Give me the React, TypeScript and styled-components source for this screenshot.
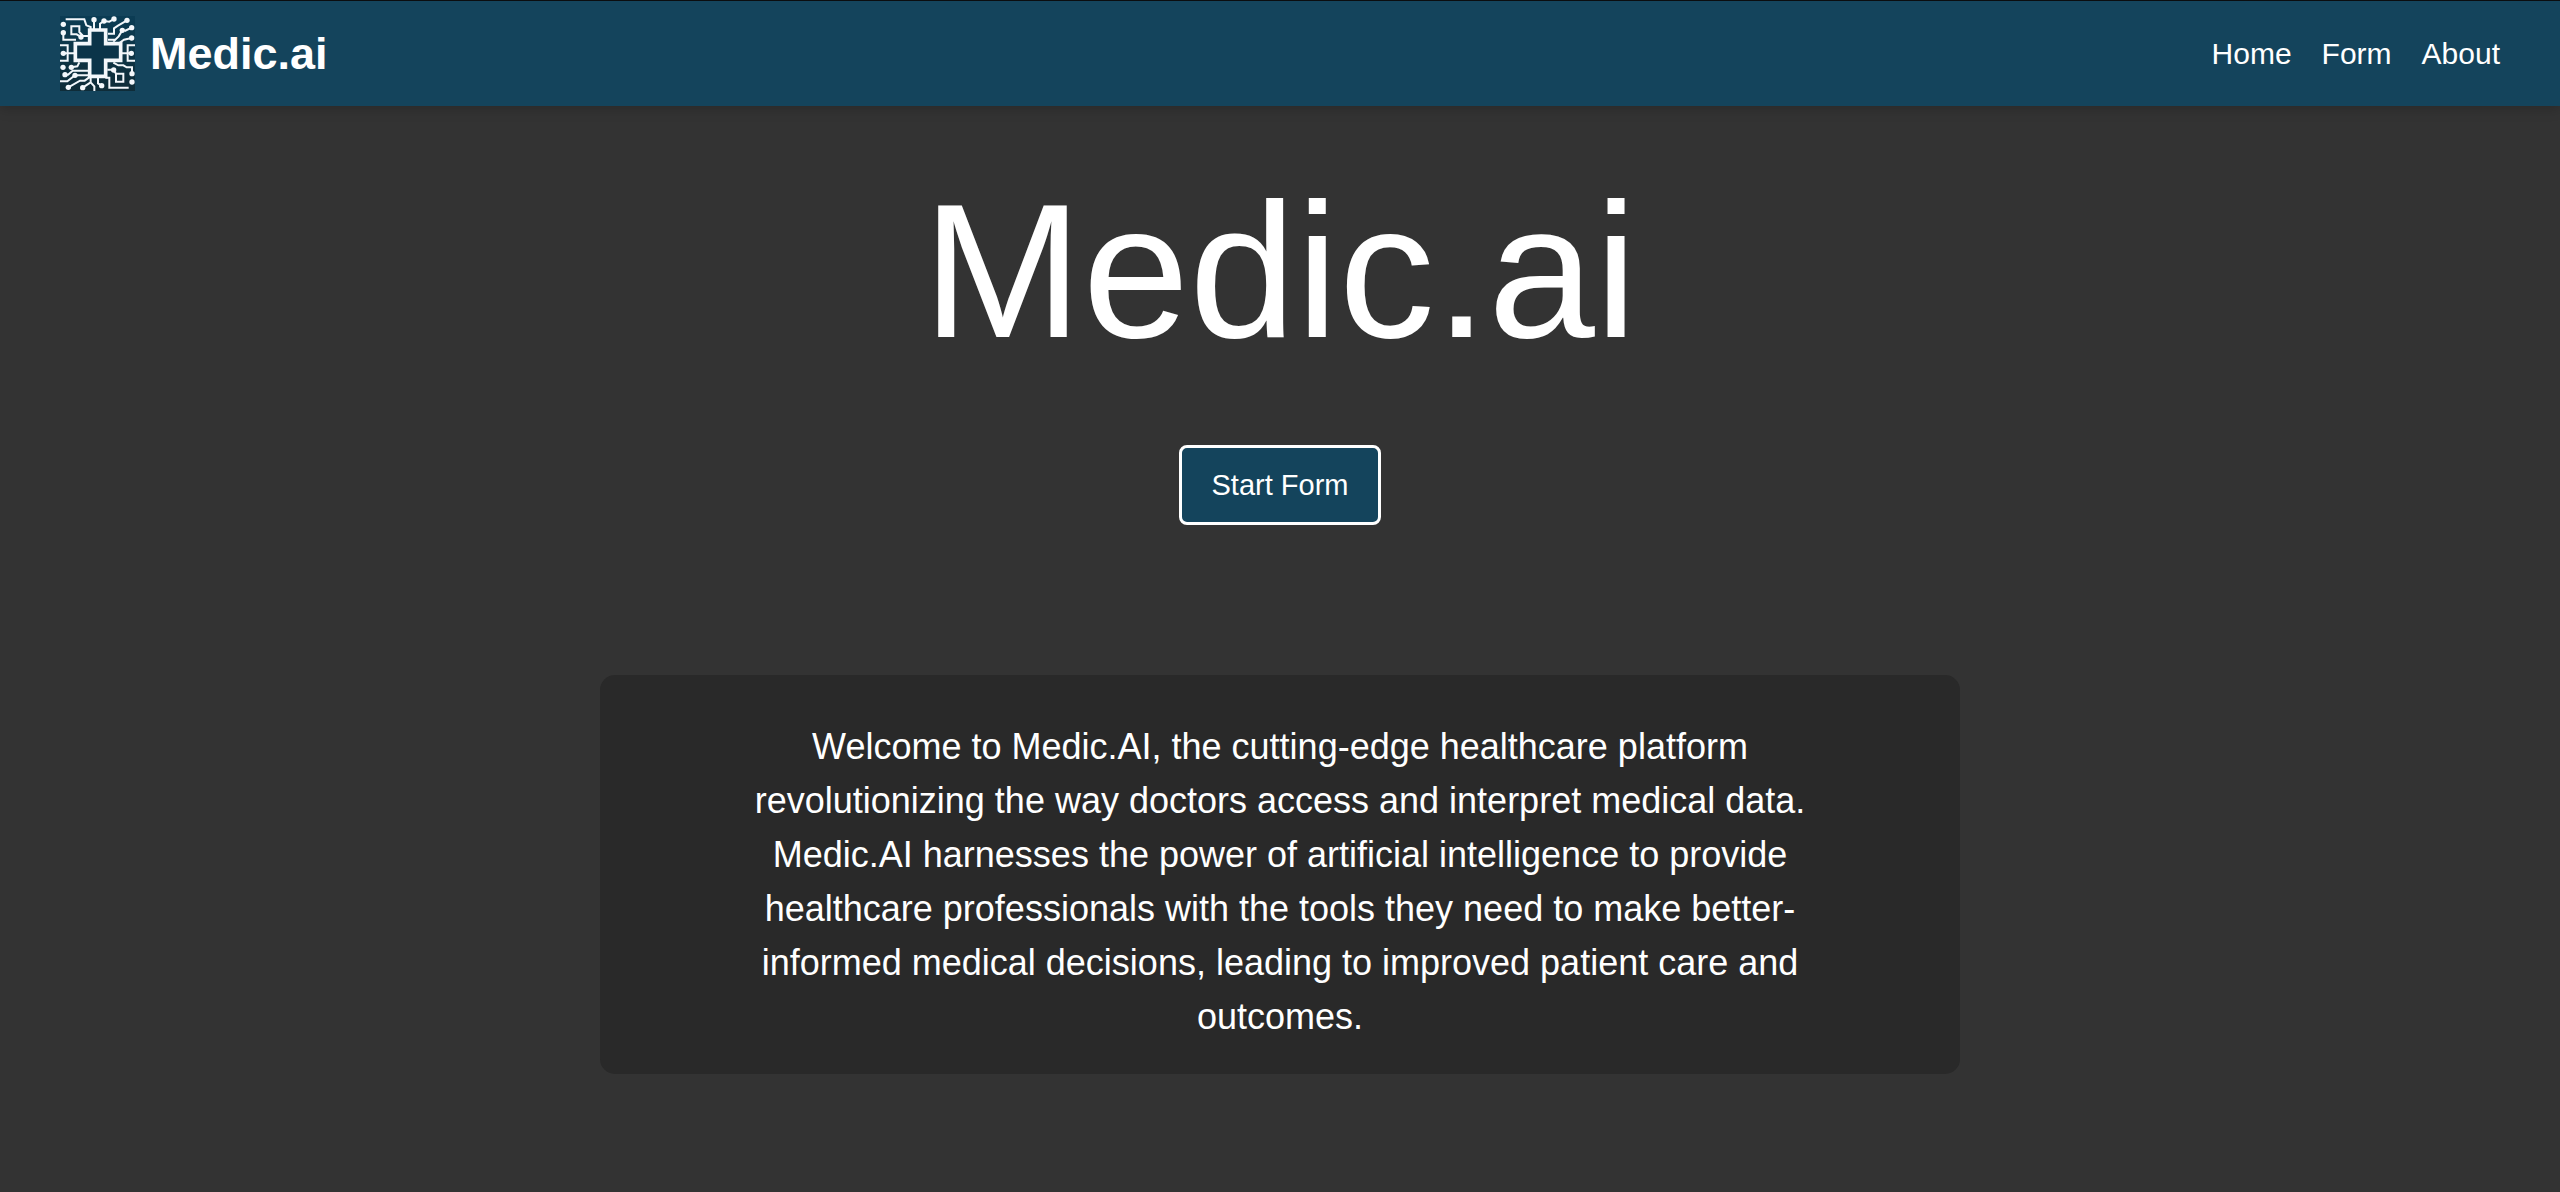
import React from 'react';
import styled, { createGlobalStyle } from 'styled-components';

const GlobalStyle = createGlobalStyle`
  *, *::before, *::after { box-sizing: border-box; }
  body {
    margin: 0;
    background: #333333;
    color: #ffffff;
    font-family: Arial, "Liberation Sans", sans-serif;
  }
`;

const Navbar = styled.header`
  display: flex;
  align-items: center;
  justify-content: space-between;
  padding: 15px 60px;
  border-top: 1px solid #0b0d0f;
  background: #14445c;
  box-shadow: 0 3px 12px rgba(0, 0, 0, 0.2);
`;

const Brand = styled.a`
  display: flex;
  align-items: center;
  gap: 15px;
  color: inherit;
  font-size: 45px;
  font-weight: 700;
  text-decoration: none;
`;

const LogoImage = styled.svg`
  display: block;
  width: 75px;
  height: 75px;
`;

const NavLinks = styled.nav`
  display: flex;
  gap: 30px;
`;

const NavLink = styled.a`
  color: inherit;
  font-size: 30px;
  text-decoration: none;
`;

const Main = styled.main`
  display: flex;
  flex-direction: column;
  align-items: center;
  padding: 55px 30px 60px;
`;

const Title = styled.h1`
  margin: 0 0 64px;
  font-size: 192px;
  font-weight: 400;
  line-height: 220px;
`;

const StartButton = styled.button`
  padding: 20px 30px;
  border: 3px solid #ffffff;
  border-radius: 8px;
  background: #14445c;
  color: #ffffff;
  font-family: inherit;
  font-size: 29px;
  line-height: 34px;
  cursor: pointer;
`;

const Card = styled.section`
  width: 100%;
  max-width: 1360px;
  margin-top: 150px;
  padding: 45px 150px 30px;
  border-radius: 15px;
  background: #292929;
`;

const Intro = styled.p`
  margin: 0;
  font-size: 36px;
  line-height: 54px;
  text-align: center;
`;

const nodes: Array<[number, number]> = [
  [40, 58], [40, 83], [93, 96], [132, 44], [162, 48], [192, 42], [231, 46],
  [217, 76], [245, 68], [245, 99], [40, 145], [244, 145], [39, 187], [64, 187],
  [45, 209], [75, 211], [55, 247], [98, 248], [155, 242], [191, 195],
  [246, 206], [246, 231],
];

function Logo() {
  return (
    <LogoImage viewBox="30 33 225 225" aria-hidden="true">
      <defs>
        <linearGradient id="board" x1="0" y1="0" x2="0" y2="1">
          <stop offset="0" stopColor="#0b3c54" />
          <stop offset="1" stopColor="#0f2c38" />
        </linearGradient>
      </defs>
      <rect x="30" y="33" width="225" height="225" fill="url(#board)" />
      <g fill="none" stroke="#f3f7fb" strokeWidth="6">
        <path d="M47 43H103L109 61L122 66V74" />
        <path d="M40 83V104H78" />
        <path d="M93 96L80 88H64V64H88V81L99 93H120" />
        <path d="M132 44V74M150 74V56L162 48L178 50L192 42" />
        <path d="M231 46L204 62L192 70V86H174" />
        <path d="M245 68L224 78M217 76L206 94L190 110" />
        <path d="M245 99L222 104L208 114M174 104H196" />
        <path d="M30 121H53V167H30M40 145H72" />
        <path d="M255 121H233V167H255M244 145H216" />
        <path d="M64 187L82 184L88 172M45 209H54L68 197H118" />
        <path d="M30 229H52L75 211H116" />
        <path d="M55 247L90 227H104L122 214" />
        <path d="M98 248L122 232M122 218V232L133 244V258M144 218V235L155 242" />
        <path d="M166 218H178V248H236" />
        <path d="M172 194H191M190 173L205 181H220L230 187H246V206" />
        <path d="M191 195L198 206V230H220V206H198" />
      </g>
      <g fill="#f3f7fb">
        {nodes.map(([x, y]) => (
          <circle key={`${x}-${y}`} cx={x} cy={y} r="8" />
        ))}
      </g>
      <path
        d="M119 75H167V116H212V166H167V214H119V166H76V116H119Z"
        fill="#0b3449"
        stroke="#f3f7fb"
        strokeWidth="11"
      />
    </LogoImage>
  );
}

export default function App() {
  return (
    <>
      <GlobalStyle />
      <Navbar>
        <Brand href="#home">
          <Logo />
          <span>Medic.ai</span>
        </Brand>
        <NavLinks aria-label="Main">
          <NavLink href="#home">Home</NavLink>
          <NavLink href="#form">Form</NavLink>
          <NavLink href="#about">About</NavLink>
        </NavLinks>
      </Navbar>
      <Main>
        <Title>Medic.ai</Title>
        <StartButton type="button">Start Form</StartButton>
        <Card>
          <Intro>
            Welcome to Medic.AI, the cutting-edge healthcare platform
            revolutionizing the way doctors access and interpret medical data.
            Medic.AI harnesses the power of artificial intelligence to provide
            healthcare professionals with the tools they need to make
            better-informed medical decisions, leading to improved patient care
            and outcomes.
          </Intro>
        </Card>
      </Main>
    </>
  );
}
